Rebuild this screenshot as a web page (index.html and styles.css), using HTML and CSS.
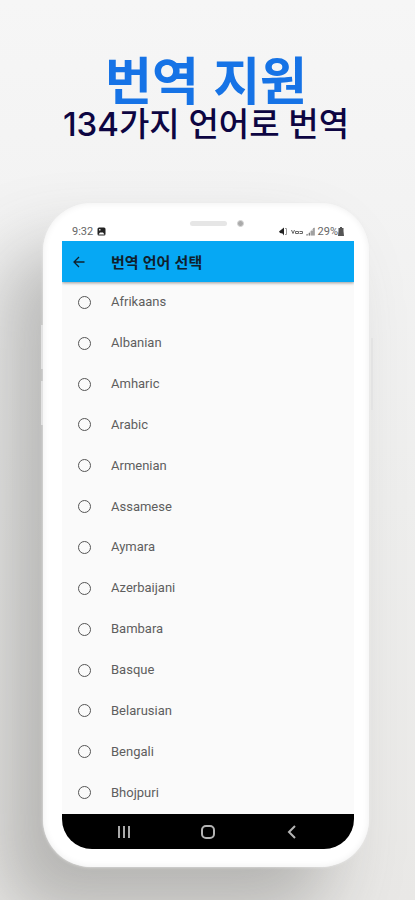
FILE: index.html
```html
<!DOCTYPE html>
<html lang="ko">
<head>
<meta charset="utf-8">
<meta name="viewport" content="width=device-width, initial-scale=1">
<title>번역 지원</title>
<link rel="stylesheet" href="styles.css">
</head>
<body>
<main class="page">
  <header class="hero">
    <h1 class="hero-title">번역 지원</h1>
    <p class="hero-sub">134가지 언어로 번역</p>
  </header>
  <section class="phone">
    <span class="side-key volume-up"></span>
    <span class="side-key volume-down"></span>
    <span class="side-key power"></span>
    <span class="speaker"></span>
    <span class="camera"></span>
    <div class="status">
      <span>9:32</span>
      <svg class="status-image" viewBox="0 0 9 9" width="9" height="9"><rect x="0.5" y="0.5" width="8" height="8" rx="1.5" fill="#222"/><path d="M1.5 7.500 3 5.500h3l1.500 2Z" fill="#fff"/><path d="M2 2h1.500v1.500H2z" fill="#ddd"/></svg>
      <svg class="status-mute" viewBox="0 0 9 9" width="9" height="9"><path d="M0 4.500 5 .5v8L3.500 6.500 1 6Z" fill="#222"/><path d="M6 1.500h1.500v6H6" fill="none" stroke="#999"/></svg>
      <svg viewBox="0 0 12 9" width="12" height="9"><path d="M.5 3 2 6.500 3.500 3M4.500 4.500h3v2h-3zM8.500 4.500h3v2h-3" fill="none" stroke="#666"/></svg>
      <svg viewBox="0 0 9 9" width="9" height="9"><path d="M0 8.500 8.500 0v8.500Z" fill="#ccc"/><path d="M1 8.500V7M3.500 8.500V6M6 8.500V4M8 8.500V1" stroke="#777"/></svg>
      <span class="battery">29%<svg viewBox="0 0 6 9" width="6" height="9"><path d="M2 0h2v1h1.500v3L6 9H0L.5 4V1H2Z" fill="#555"/></svg></span>
    </div>
    <div class="screen">
      <div class="appbar">
        <button class="icon-btn" type="button" aria-label="뒤로"><svg viewBox="0 0 12 12" width="12" height="12"><path d="M11.500 6H1M6 1 1 6l5 5" fill="none" stroke="#10202c" stroke-width="1.300"/></svg></button>
        <h2 class="appbar-title">번역 언어 선택</h2>
      </div>
      <form class="list">
        <label class="row"><input type="radio" name="language">Afrikaans</label>
        <label class="row"><input type="radio" name="language">Albanian</label>
        <label class="row"><input type="radio" name="language">Amharic</label>
        <label class="row"><input type="radio" name="language">Arabic</label>
        <label class="row"><input type="radio" name="language">Armenian</label>
        <label class="row"><input type="radio" name="language">Assamese</label>
        <label class="row"><input type="radio" name="language">Aymara</label>
        <label class="row"><input type="radio" name="language">Azerbaijani</label>
        <label class="row"><input type="radio" name="language">Bambara</label>
        <label class="row"><input type="radio" name="language">Basque</label>
        <label class="row"><input type="radio" name="language">Belarusian</label>
        <label class="row"><input type="radio" name="language">Bengali</label>
        <label class="row"><input type="radio" name="language">Bhojpuri</label>
      </form>
      <nav class="navbar">
        <button class="icon-btn" type="button" aria-label="최근 앱"><svg viewBox="0 0 14 14" width="14" height="14"><path d="M2 1v12M7 1v12M12 1v12" stroke="#aaa" stroke-width="2"/></svg></button>
        <button class="icon-btn" type="button" aria-label="홈"><svg viewBox="0 0 14 14" width="14" height="14"><rect x="1" y="1" width="12" height="12" rx="4" fill="none" stroke="#b4b4b4" stroke-width="2"/></svg></button>
        <button class="icon-btn" type="button" aria-label="이전"><svg viewBox="0 0 14 14" width="14" height="14"><path d="M10 1 4 7l6 6" fill="none" stroke="#b4b4b4" stroke-width="2"/></svg></button>
      </nav>
    </div>
  </section>
</main>
</body>
</html>
```
FILE: styles.css
```css
* { box-sizing: border-box; }
body {
  margin: 0;
  font-family: Roboto, "Noto Sans CJK KR", sans-serif;
  background: #f1f1f0;
}
.page {
  min-height: 100vh;
  padding: 53px 46px 33px 43px;
  overflow: hidden;
  background: linear-gradient(180deg, #f6f6f6 0, #f3f3f3 200px, #eeeeed 500px, #e9e8e6 900px);
}
.hero { text-align: center; white-space: nowrap; }
.hero-title {
  margin: 0;
  font: 700 51px/50px "Noto Sans CJK KR", sans-serif;
  color: #1673e6;
}
.hero-sub {
  margin: 0 -20px 58px;
  font: 500 33px/42px Inter, "Noto Sans CJK KR", sans-serif;
  color: #0d0542;
}
.phone {
  position: relative;
  padding: 19px 15px 18px 19px;
  border-radius: 48px;
  background: #fff;
  box-shadow:
    inset 0 0 7px #eeeeee,
    0 0 3px #ececec,
    -40px 46px 70px rgba(80, 80, 76, .34);
}
.side-key {
  position: absolute;
  width: 2px;
  background: #e3e3e3;
}
.volume-up { left: -2px; top: 122px; height: 44px; }
.volume-down { left: -2px; top: 178px; height: 44px; }
.power { right: -4px; top: 135px; height: 72px; }
.speaker {
  position: absolute;
  top: 18px;
  left: 147px;
  width: 37px;
  height: 5px;
  border-radius: 3px;
  background: #e6e6e6;
}
.camera {
  position: absolute;
  top: 17px;
  left: 194px;
  width: 7px;
  height: 7px;
  border-radius: 50%;
  background: #aaa;
  border: 1px solid #d6d6d6;
}
.status {
  display: flex;
  align-items: center;
  gap: 3px;
  height: 19px;
  padding: 0 10px;
  font-size: 11px;
  color: #666;
}
.status-image { margin-left: 1px; }
.status-mute { margin-left: auto; }
.battery { display: flex; align-items: center; }
.screen {
  display: flex;
  flex-direction: column;
  min-height: 608px;
  overflow: hidden;
  border-radius: 0 0 30px 30px;
  background: #fafafa;
}
.appbar {
  display: flex;
  align-items: center;
  height: 41px;
  padding-left: 11px;
  gap: 26px;
  background: #06a8f4;
  box-shadow: 0 1px 3px rgba(0, 0, 0, .4);
}
.icon-btn {
  display: flex;
  padding: 0;
  border: 0;
  background: none;
}
.appbar-title {
  margin: 0;
  font: 700 15px/20px "Noto Sans CJK KR", sans-serif;
  color: #10202c;
}
.list {
  flex: 1;
  display: grid;
  grid-auto-rows: 1fr;
  padding-bottom: 1px;
}
.row {
  display: flex;
  align-items: center;
  gap: 20px;
  padding-left: 16px;
  font-size: 13px;
  line-height: 16px;
  color: #5e5e5e;
}
.row input {
  appearance: none;
  width: 13px;
  height: 13px;
  margin: 0;
  border: 1px solid #555;
  border-radius: 50%;
}
.navbar {
  display: flex;
  justify-content: space-around;
  align-items: center;
  height: 35px;
  padding: 0 20px;
  background: #000;
}
```
